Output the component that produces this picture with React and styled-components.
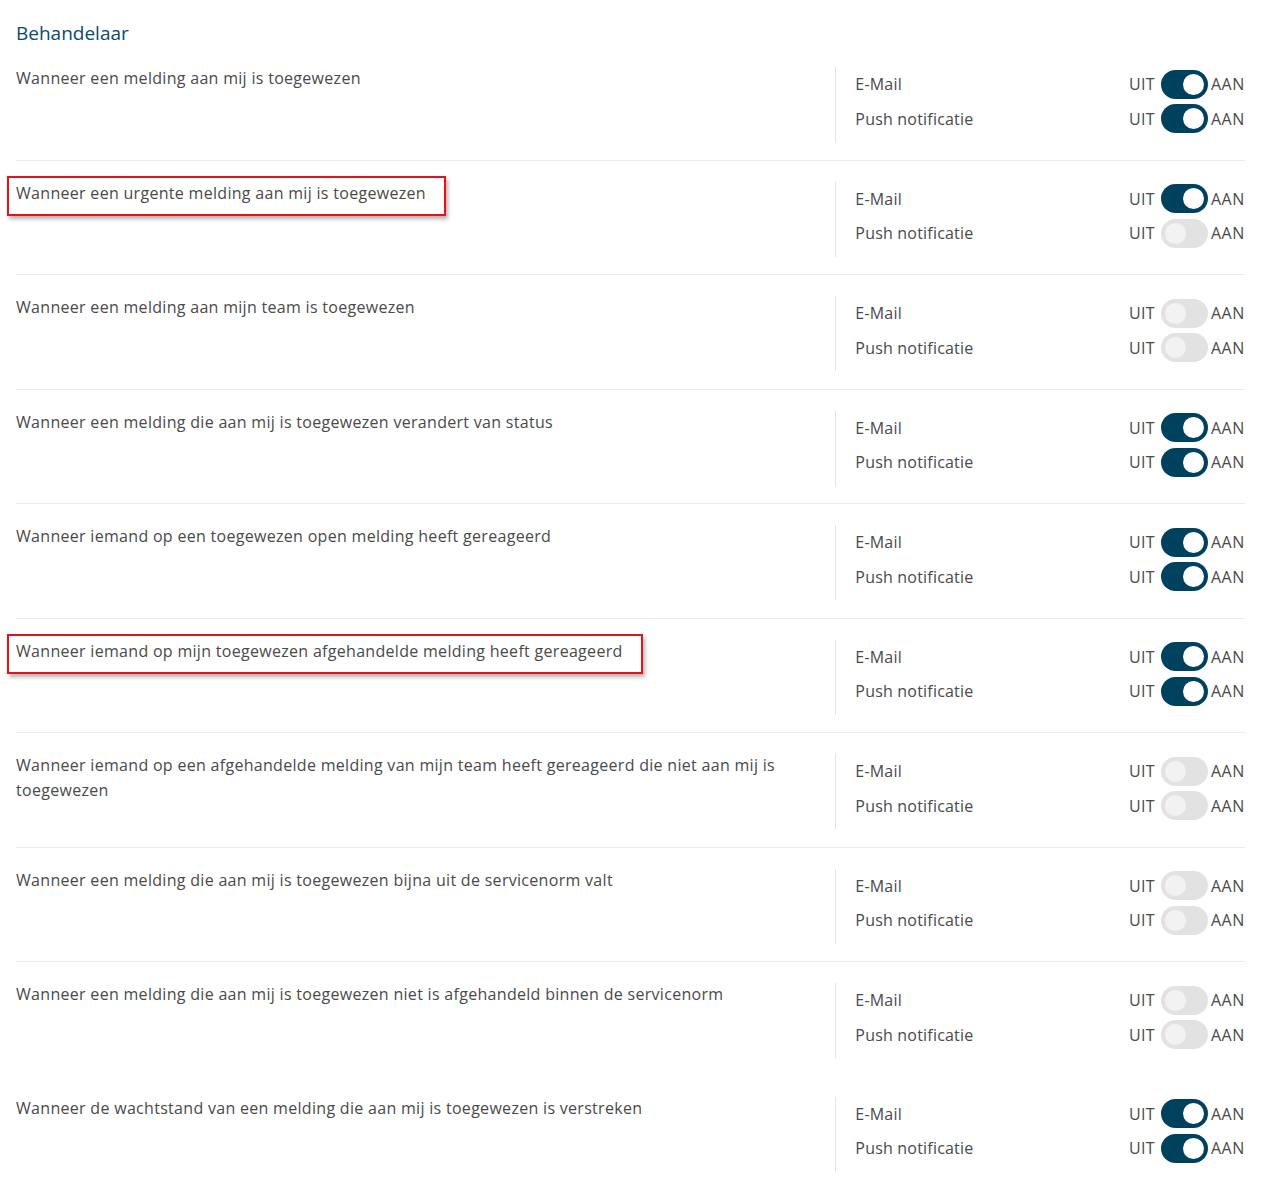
import React from 'react';
import styled, { createGlobalStyle } from 'styled-components';

const GlobalStyle = createGlobalStyle`
  body {
    margin: 0;
    background: #ffffff;
    font-family: "Open Sans", Lato, Arial, sans-serif;
    color: #4a4a4a;
  }
`;

const TEAL = '#00425e';

const Page = styled.div`
  padding: 0 20px 0 16px;
`;

const Heading = styled.h3`
  margin: 0;
  padding-top: 20px;
  font-size: 19px;
  font-weight: 400;
  line-height: 26px;
  color: #0b4a6c;
`;

const Row = styled.div`
  display: grid;
  grid-template-columns: 2fr 1fr;
  padding: 21px 0 17.5px;
  border-bottom: ${(p) => (p.$last ? 'none' : '1px solid #ebebeb')};
`;

const Question = styled.div`
  margin-top: -1px;
  font-size: 16px;
  letter-spacing: 0.3px;
  line-height: 25px;
  padding-right: 50px;
`;

const Marked = styled.span`
  position: relative;

  &::after {
    content: '';
    position: absolute;
    top: -6px;
    bottom: -12px;
    left: -9px;
    right: -20px;
    border: 2px solid #e2141b;
    box-shadow: 2px 3px 4px rgba(0, 0, 0, 0.3);
    pointer-events: none;
  }
`;

const Channels = styled.div`
  border-left: 1px solid #e3e3e3;
  padding: 0 0 6px 19px;
`;

const Channel = styled.div`
  display: flex;
  align-items: center;
  height: 34.5px;
  font-size: 16px;
  letter-spacing: 0.2px;
`;

const Label = styled.span`
  flex: 1;
`;

const Side = styled.span`
  font-size: 16px;
  letter-spacing: ${(p) => (p.$end ? '0.6px' : '0.3px')};
`;

const Track = styled.span`
  position: relative;
  width: 47px;
  height: 29px;
  border-radius: 15px;
  margin: 0 3px 0 6px;
  background: ${(p) => (p.$on ? TEAL : '#e2e2e2')};
`;

const Knob = styled.span`
  position: absolute;
  top: 4px;
  left: ${(p) => (p.$on ? '22px' : '4px')};
  width: 21px;
  height: 21px;
  border-radius: 50%;
  background: ${(p) => (p.$on ? '#ffffff' : '#f2f2f2')};
`;

const Toggle = ({ on }) => (
  <>
    <Side>UIT</Side>
    <Track $on={on}>
      <Knob $on={on} />
    </Track>
    <Side $end>AAN</Side>
  </>
);

const rows = [
  { text: 'Wanneer een melding aan mij is toegewezen', mail: true, push: true },
  { text: 'Wanneer een urgente melding aan mij is toegewezen', mail: true, push: false, marked: true },
  { text: 'Wanneer een melding aan mijn team is toegewezen', mail: false, push: false },
  { text: 'Wanneer een melding die aan mij is toegewezen verandert van status', mail: true, push: true },
  { text: 'Wanneer iemand op een toegewezen open melding heeft gereageerd', mail: true, push: true },
  { text: 'Wanneer iemand op mijn toegewezen afgehandelde melding heeft gereageerd', mail: true, push: true, marked: true },
  { text: 'Wanneer iemand op een afgehandelde melding van mijn team heeft gereageerd die niet aan mij is toegewezen', mail: false, push: false },
  { text: 'Wanneer een melding die aan mij is toegewezen bijna uit de servicenorm valt', mail: false, push: false },
  { text: 'Wanneer een melding die aan mij is toegewezen niet is afgehandeld binnen de servicenorm', mail: false, push: false, last: true },
  { text: 'Wanneer de wachtstand van een melding die aan mij is toegewezen is verstreken', mail: true, push: true, last: true },
];

export default function App() {
  return (
    <Page>
      <GlobalStyle />
      <Heading>Behandelaar</Heading>
      {rows.map((r) => (
        <Row key={r.text} $last={r.last}>
          <Question>{r.marked ? <Marked>{r.text}</Marked> : r.text}</Question>
          <Channels>
            <Channel>
              <Label>E-Mail</Label>
              <Toggle on={r.mail} />
            </Channel>
            <Channel>
              <Label>Push notificatie</Label>
              <Toggle on={r.push} />
            </Channel>
          </Channels>
        </Row>
      ))}
    </Page>
  );
}
